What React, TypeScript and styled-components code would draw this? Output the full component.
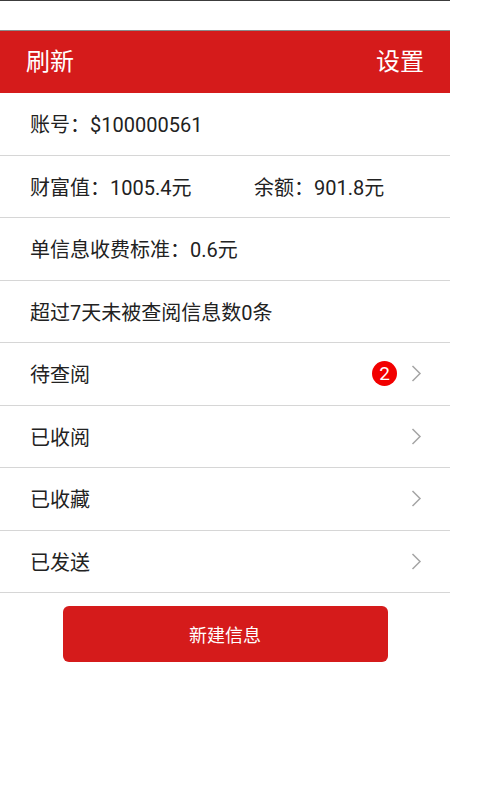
import styled, { createGlobalStyle } from 'styled-components';

const GlobalStyle = createGlobalStyle`
  html, body {
    margin: 0;
    padding: 0;
    background: #ffffff;
    font-family: Roboto, "Noto Sans CJK SC", sans-serif;
  }
`;

const Screen = styled.div`
  width: 450px;
  border-top: 1px solid #3c3c3c;
  padding-top: 29px;
`;

const Header = styled.header`
  height: 63px;
  border-top: 1px solid #8a8a8a;
  background-color: #d51b1b;
  display: flex;
  align-items: center;
  justify-content: space-between;
  padding: 0 26px;
  box-sizing: border-box;
  color: #ffffff;
  font-size: 24px;
`;

const HeaderAction = styled.span`
  line-height: 1;
`;

const Row = styled.div<{ $clickable?: boolean }>`
  height: 62.5px;
  box-sizing: border-box;
  border-bottom: 1px solid #d6d6d6;
  padding: 0 28px 0 30px;
  display: flex;
  align-items: center;
  font-size: 20px;
  color: #222222;
  cursor: ${props => (props.$clickable ? 'pointer' : 'default')};
`;

const Split = styled.div`
  display: grid;
  grid-template-columns: 224px 1fr;
  width: 100%;
`;

const Label = styled.span`
  flex: 1;
`;

const Badge = styled.span`
  width: 25px;
  height: 25px;
  border-radius: 50%;
  background-color: #f20000;
  color: #ffffff;
  font-size: 19px;
  display: flex;
  align-items: center;
  justify-content: center;
  margin-right: 14px;
`;

const ChevronIcon = styled.svg`
  width: 11px;
  height: 17px;
  fill: none;
  stroke: #a5a5a5;
  stroke-width: 1.5;
`;

const Chevron = () => (
  <ChevronIcon viewBox="0 0 11 17">
    <polyline points="1.5,1 9,8.5 1.5,16" />
  </ChevronIcon>
);

const Actions = styled.div`
  display: flex;
  justify-content: center;
  padding-top: 13px;
`;

const PrimaryButton = styled.button`
  width: 325px;
  height: 56px;
  border: none;
  border-radius: 6px;
  background-color: #d51b1b;
  color: #ffffff;
  font-family: Roboto, "Noto Sans CJK SC", sans-serif;
  font-size: 18px;
  cursor: pointer;
`;

const menu = [
  { label: '待查阅', badge: 2 },
  { label: '已收阅' },
  { label: '已收藏' },
  { label: '已发送' },
];

const App = () => {
  return (
    <>
      <GlobalStyle />
      <Screen>
        <Header>
          <HeaderAction>刷新</HeaderAction>
          <HeaderAction>设置</HeaderAction>
        </Header>
        <Row>账号：$100000561</Row>
        <Row>
          <Split>
            <span>财富值：1005.4元</span>
            <span>余额：901.8元</span>
          </Split>
        </Row>
        <Row>单信息收费标准：0.6元</Row>
        <Row>超过7天未被查阅信息数0条</Row>
        {menu.map(item => (
          <Row key={item.label} $clickable>
            <Label>{item.label}</Label>
            {item.badge ? <Badge>{item.badge}</Badge> : null}
            <Chevron />
          </Row>
        ))}
        <Actions>
          <PrimaryButton>新建信息</PrimaryButton>
        </Actions>
      </Screen>
    </>
  );
};

export default App;
